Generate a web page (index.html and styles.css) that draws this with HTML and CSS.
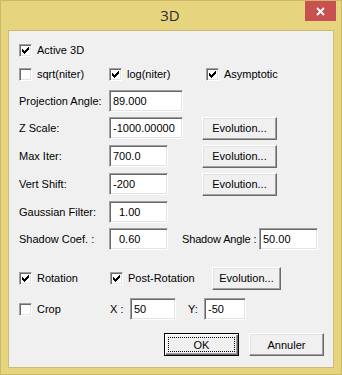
FILE: index.html
```html
<!DOCTYPE html>
<html lang="fr">
<head>
  <meta charset="UTF-8" />
  <title>3D</title>
  <link rel="stylesheet" href="styles.css">
</head>
<body>

  <div class="window">
    <div class="titlebar">
      <span></span>
      <span class="title">3D</span>
      <span class="close">
        <svg width="9" height="9" viewBox="0 0 9 9"><path d="M1 1L8 8M8 1L1 8" stroke="#fff" stroke-width="1.8"/></svg>
      </span>
    </div>

    <div class="client">
      <div class="row r1">
        <span class="check"><span class="box"><svg class="tick" viewBox="0 0 13 13"><path d="M9 3h1v1h-1zM8 4h2v1h-2zM3 5h1v1h-1zM7 5h3v1h-3zM3 6h2v1h-2zM6 6h3v1h-3zM3 7h5v1h-5zM4 8h3v1h-3zM5 9h1v1h-1z"/></svg></span>Active 3D</span>
      </div>

      <div class="row r2">
        <span class="check cell"><span class="box"></span>sqrt(niter)</span>
        <span class="check cell-log"><span class="box"><svg class="tick" viewBox="0 0 13 13"><path d="M9 3h1v1h-1zM8 4h2v1h-2zM3 5h1v1h-1zM7 5h3v1h-3zM3 6h2v1h-2zM6 6h3v1h-3zM3 7h5v1h-5zM4 8h3v1h-3zM5 9h1v1h-1z"/></svg></span>log(niter)</span>
        <span class="check"><span class="box"><svg class="tick" viewBox="0 0 13 13"><path d="M9 3h1v1h-1zM8 4h2v1h-2zM3 5h1v1h-1zM7 5h3v1h-3zM3 6h2v1h-2zM6 6h3v1h-3zM3 7h5v1h-5zM4 8h3v1h-3zM5 9h1v1h-1z"/></svg></span>Asymptotic</span>
      </div>

      <div class="row r3">
        <span class="cell">Projection Angle:</span>
        <input class="edit wide" type="text" value="89.000" readonly>
      </div>

      <div class="row r4">
        <span class="cell">Z Scale:</span>
        <input class="edit wide" type="text" value="-1000.00000" readonly>
        <button class="btn evo-wide">Evolution...</button>
      </div>

      <div class="row r5">
        <span class="cell">Max Iter:</span>
        <input class="edit" type="text" value="700.0" readonly>
        <button class="btn evo">Evolution...</button>
      </div>

      <div class="row r6">
        <span class="cell">Vert Shift:</span>
        <input class="edit" type="text" value="-200" readonly>
        <button class="btn evo">Evolution...</button>
      </div>

      <div class="row r7">
        <span class="cell">Gaussian Filter:</span>
        <input class="edit indent" type="text" value="1.00" readonly>
      </div>

      <div class="row r8">
        <span class="cell">Shadow Coef. :</span>
        <input class="edit indent" type="text" value="0.60" readonly>
        <span class="angle-label">Shadow Angle :</span>
        <input class="edit" type="text" value="50.00" readonly>
      </div>

      <div class="row r9">
        <span class="check cell-a"><span class="box"><svg class="tick" viewBox="0 0 13 13"><path d="M9 3h1v1h-1zM8 4h2v1h-2zM3 5h1v1h-1zM7 5h3v1h-3zM3 6h2v1h-2zM6 6h3v1h-3zM3 7h5v1h-5zM4 8h3v1h-3zM5 9h1v1h-1z"/></svg></span>Rotation</span>
        <span class="check cell-post"><span class="box"><svg class="tick" viewBox="0 0 13 13"><path d="M9 3h1v1h-1zM8 4h2v1h-2zM3 5h1v1h-1zM7 5h3v1h-3zM3 6h2v1h-2zM6 6h3v1h-3zM3 7h5v1h-5zM4 8h3v1h-3zM5 9h1v1h-1z"/></svg></span>Post-Rotation</span>
        <button class="btn evo-rot">Evolution...</button>
      </div>

      <div class="row r10">
        <span class="check cell-a"><span class="box"></span>Crop</span>
        <span class="x-label">X :</span>
        <input class="edit small-x" type="text" value="50" readonly>
        <span class="y-label">Y:</span>
        <input class="edit small-y" type="text" value="-50" readonly>
      </div>

      <div class="row r11">
        <button class="btn default"><span class="focus">OK</span></button>
        <button class="btn">Annuler</button>
      </div>
    </div>
  </div>

</body>
</html>
```

FILE: styles.css
```css
body {
  margin: 0;
  font-family: "Liberation Sans", Arial, sans-serif;
  font-size: 11px;
  color: #000;
}
.window {
  width: 342px;
  height: 375px;
  box-sizing: border-box;
  background: #e6d47f;
  border: 1px solid #cdb964;
}
.titlebar {
  height: 29px;
  display: grid;
  grid-template-columns: 1fr auto 1fr;
}
.title {
  font-family: "Open Sans", "Noto Sans", sans-serif;
  font-size: 15px;
  color: #2b2b2b;
  line-height: 29px;
  padding-right: 2px;
}
.close {
  justify-self: end;
  width: 31px;
  height: 20px;
  margin-right: 5px;
  background: #c75050;
  display: flex;
  align-items: center;
  justify-content: center;
}
.client {
  width: 326px;
  height: 338px;
  margin-left: 7px;
  box-sizing: border-box;
  background: #f0f0f0;
  border: 1px solid #cbbb74;
  padding: 8px 0 0 10px;
}
.row {
  display: flex;
  align-items: center;
  height: 22px;
  white-space: nowrap;
}
.r2 { margin-top: 2px; }
.r3, .r4, .r8 { margin-top: 5px; }
.r5, .r6, .r7 { margin-top: 6px; }
.r9 { margin-top: 17px; }
.r10 { margin-top: 9px; }
.r11 {
  margin-top: 13px;
  height: 23px;
  justify-content: flex-end;
  gap: 10px;
  padding-right: 9px;
}
.cell { width: 90px; }
.cell-log { width: 97px; }
.cell-a { width: 91px; }
.cell-post { width: 102px; }

.check {
  display: flex;
  align-items: center;
}
.box {
  width: 13px;
  height: 13px;
  box-sizing: border-box;
  background: #fff;
  border: 1px solid;
  border-color: #a0a0a0 #fff #fff #a0a0a0;
  box-shadow: inset 1px 1px 0 #696969, inset -1px -1px 0 #e3e3e3;
  margin-right: 5px;
  position: relative;
}
.tick {
  position: absolute;
  left: -1px;
  top: -1px;
  width: 13px;
  height: 13px;
  shape-rendering: crispEdges;
}

.edit {
  width: 59px;
  height: 22px;
  box-sizing: border-box;
  margin: 0;
  padding: 0 3px;
  font: inherit;
  color: #000;
  background: #fff;
  border: 1px solid;
  border-color: #a0a0a0 #fff #fff #a0a0a0;
  box-shadow: inset 1px 1px 0 #696969, inset -1px -1px 0 #e3e3e3;
  outline: none;
}
.edit.wide { width: 74px; }
.edit.indent { padding-left: 9px; }
.edit.small-x { width: 46px; }
.edit.small-y { width: 42px; }

.angle-label {
  margin-left: 14px;
  width: 77px;
  letter-spacing: -0.15px;
}
.x-label { width: 20px; }
.y-label {
  margin-left: 12px;
  width: 16px;
}

.btn {
  width: 75px;
  height: 23px;
  box-sizing: border-box;
  margin: 0;
  padding: 0;
  font: inherit;
  color: #000;
  background: #f0f0f0;
  border: 1px solid;
  border-color: #fff #696969 #696969 #fff;
  box-shadow: inset -1px -1px 0 #a0a0a0, inset 1px 1px 0 #e3e3e3;
}
.evo-wide { margin-left: 19px; }
.evo { margin-left: 34px; }
.evo-rot { width: 69px; }
.btn.default {
  border: 1px solid #000;
  box-shadow: inset 1px 1px 0 #fff, inset -1px -1px 0 #696969, inset -2px -2px 0 #a0a0a0;
  display: flex;
  padding: 3px;
}
.focus {
  flex: 1;
  border: 1px dotted #000;
  display: flex;
  align-items: center;
  justify-content: center;
}
```
